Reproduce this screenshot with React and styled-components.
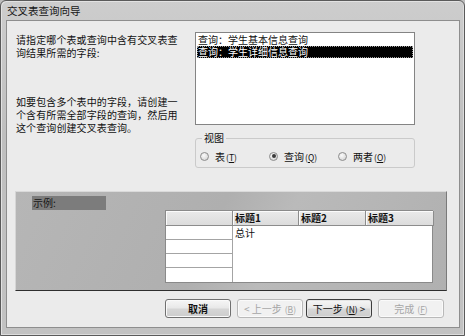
import React from "react";
import styled, { createGlobalStyle } from "styled-components";

const GlobalStyle = createGlobalStyle`
  * { box-sizing: border-box; }
  html, body { margin: 0; padding: 0; background: #bdbdbd; }
  body {
    font-family: "Noto Sans CJK SC", "Liberation Sans", sans-serif;
    font-size: 10px;
    color: #111;
  }
`;

const Window = styled.div`
  width: 465px;
  height: 336px;
  display: flex;
  flex-direction: column;
  padding: 0 4px 7px 5px;
  background: linear-gradient(#cdcdcd, #bfbfbf 40%, #c2c2c2);
  border: 1px solid #5a5a5a;
  border-radius: 6px 6px 0 0;
  box-shadow: inset 1px 1px 0 #e2e2e2, inset -1px -1px 0 #dcdcdc;
`;

const TitleBar = styled.div`
  height: 20px;
  display: flex;
  align-items: center;
  padding-left: 1px;
  font-size: 10.5px;
  color: #151515;
`;

const Client = styled.div`
  flex: 1;
  display: flex;
  flex-direction: column;
  padding: 11px 0 9px;
  background: #ebebeb;
  border: 1px solid #8e8e8e;
`;

const TopRow = styled.div`
  display: flex;
  padding-left: 9px;
`;

const Help = styled.div`
  width: 179px;
  line-height: 13px;
  letter-spacing: 0.1px;
`;

const Para = styled.p`
  width: 164px;
  margin: ${(p) => (p.$gap ? "36px" : "1px")} 0 0;
`;

const Side = styled.div`
  width: 220px;
  display: flex;
  flex-direction: column;
`;

const ListBox = styled.div`
  height: 93px;
  padding: 1px;
  background: #fff;
  border: 1px solid #848484;
`;

const ListItem = styled.div`
  height: 12px;
  line-height: 12px;
  padding-left: 1px;
  white-space: nowrap;
  color: ${(p) => (p.$selected ? "#fff" : "#111")};
  background: ${(p) => (p.$selected ? "#000" : "transparent")};
  outline: ${(p) => (p.$selected ? "1px dotted #9a9a9a" : "none")};
  outline-offset: -1px;
`;

const Group = styled.fieldset`
  margin: 7px 0 0;
  padding: 0;
  border: 1px solid #cacaca;
  border-radius: 3px;
  min-width: 0;
`;

const Legend = styled.legend`
  margin-left: 6px;
  padding: 0 2px;
  line-height: 12px;
`;

const RadioRow = styled.div`
  display: flex;
  padding: 6px 0 5px 4px;
`;

const RadioOption = styled.label`
  width: 69px;
  height: 12px;
  display: flex;
  align-items: center;
  gap: 6px;
`;

const RadioDot = styled.span`
  width: 9px;
  height: 9px;
  border-radius: 50%;
  border: 1px solid #8c8c8c;
  background: radial-gradient(circle at 40% 35%, #fafafa, #cfcfcf);
  display: flex;
  align-items: center;
  justify-content: center;

  &::after {
    content: "";
    width: 4px;
    height: 4px;
    border-radius: 50%;
    background: ${(p) => (p.$checked ? "#3a3a3a" : "transparent")};
  }
`;

const Key = styled.span`
  font-size: 8.5px;
  margin-left: 1px;
`;

const Sample = styled.div`
  margin: 23px 0 0 8px;
  width: 432px;
  height: 100px;
  padding: 4px 0 9px 16px;
  background: linear-gradient(115deg, #b6b6b6 0%, #afafaf 45%, #bababa 60%, #b0b0b0 100%);
  border-top: 1px solid #dadada;
  border-left: 1px solid #d6d6d6;
  border-right: 1px solid #7a7a7a;
  border-bottom: 1px solid #2e2e2e;
`;

const SampleLabel = styled.div`
  width: 74px;
  height: 14px;
  line-height: 14px;
  padding-left: 1px;
  background: #7c7c7c;
  color: #161616;
`;

const Grid = styled.div`
  margin-left: 133px;
  width: 268px;
  display: grid;
  grid-template-columns: 67px 66px 67px 68px;
  grid-template-rows: 15px repeat(4, 14px);
  border: 1px solid #8a8a8a;
  background: #fff;
`;

const HeadCell = styled.div`
  background: linear-gradient(#eaeaea, #dcdcdc);
  border-right: 1px solid #8c8c8c;
  border-bottom: 1px solid #8c8c8c;
  box-shadow: inset 1px 1px 0 #fbfbfb;
  padding-left: 2px;
  font-weight: 700;
  line-height: 13px;
  &:last-child {
    border-right: none;
  }
`;

const RowHead = styled.div`
  background: #fff;
  border-right: 1px solid #a4a4a4;
  border-bottom: 1px solid #a4a4a4;
  grid-column: 1;
  &:nth-last-of-type(2) {
    border-bottom: none;
  }
`;

const Body = styled.div`
  grid-column: 2 / 5;
  grid-row: 2 / 6;
  padding: 1px 2px;
  line-height: 12px;
`;

const ButtonRow = styled.div`
  margin-top: 8px;
  padding-right: 15px;
  display: flex;
  justify-content: flex-end;
  gap: 6px;
`;

const Pair = styled.div`
  display: flex;
  gap: 3px;
`;

const Button = styled.button`
  width: 66px;
  height: 19px;
  padding: 0;
  font-family: inherit;
  font-size: 10px;
  font-weight: ${(p) => (p.$strong ? 700 : 400)};
  border-radius: 3px;
  display: flex;
  align-items: center;
  justify-content: center;
  gap: 2px;
  color: ${(p) => (p.disabled ? "#a6a6a6" : "#111")};
  border: 1px solid ${(p) => (p.disabled ? "#b9b9b9" : p.$default ? "#3c3c3c" : "#707070")};
  background: ${(p) =>
    p.disabled
      ? "#f1f1f1"
      : "linear-gradient(#f6f6f6 0%, #e8e8e8 48%, #d6d6d6 52%, #cdcdcd 100%)"};
  box-shadow: ${(p) => (p.$default ? "inset 0 0 0 1px #e4e4e4" : "inset 0 0 0 1px #fafafa")};
`;

const App = () => (
  <Window>
    <GlobalStyle />
    <TitleBar>交叉表查询向导</TitleBar>
    <Client>
      <TopRow>
        <Help>
          <Para>请指定哪个表或查询中含有交叉表查询结果所需的字段:</Para>
          <Para $gap>如要包含多个表中的字段，请创建一个含有所需全部字段的查询，然后用这个查询创建交叉表查询。</Para>
        </Help>
        <Side>
          <ListBox>
            <ListItem>查询：学生基本信息查询</ListItem>
            <ListItem $selected>查询：学生详细信息查询</ListItem>
          </ListBox>
          <Group>
            <Legend>视图</Legend>
            <RadioRow>
              <RadioOption>
                <RadioDot />
                <span>
                  表<Key>(<u>T</u>)</Key>
                </span>
              </RadioOption>
              <RadioOption>
                <RadioDot $checked />
                <span>
                  查询<Key>(<u>Q</u>)</Key>
                </span>
              </RadioOption>
              <RadioOption>
                <RadioDot />
                <span>
                  两者<Key>(<u>O</u>)</Key>
                </span>
              </RadioOption>
            </RadioRow>
          </Group>
        </Side>
      </TopRow>

      <Sample>
        <SampleLabel>示例:</SampleLabel>
        <Grid>
          <HeadCell />
          <HeadCell>标题1</HeadCell>
          <HeadCell>标题2</HeadCell>
          <HeadCell>标题3</HeadCell>
          <RowHead />
          <RowHead />
          <RowHead />
          <RowHead />
          <Body>总计</Body>
        </Grid>
      </Sample>

      <ButtonRow>
        <Button $strong>取消</Button>
        <Pair>
          <Button disabled>
            &lt; 上一步<Key>(<u>B</u>)</Key>
          </Button>
          <Button $default>
            下一步<Key>(<u>N</u>)</Key> &gt;
          </Button>
        </Pair>
        <Button disabled>
          完成<Key>(<u>F</u>)</Key>
        </Button>
      </ButtonRow>
    </Client>
  </Window>
);

export default App;
